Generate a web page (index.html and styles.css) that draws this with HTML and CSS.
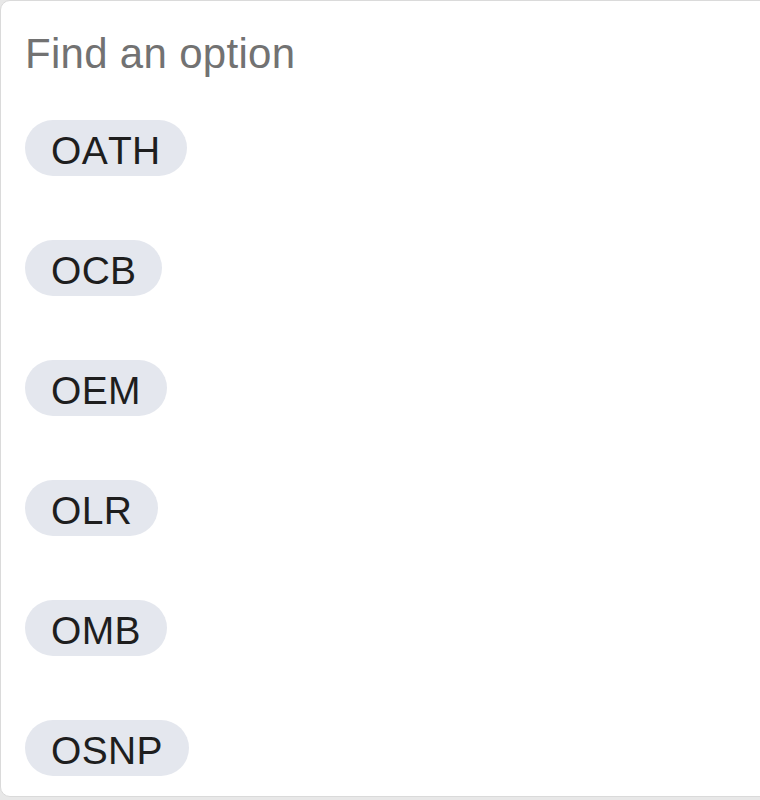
FILE: index.html
```html
<!DOCTYPE html>
<html lang="en">
<head>
    <meta charset="UTF-8">
    <meta name="viewport" content="width=device-width, initial-scale=1.0">
    <title>Find an option</title>
    <link rel="stylesheet" href="styles.css">
</head>
<body>
    <div class="panel">
        <div class="search">Find an option</div>
        <div class="options">
            <div class="option"><span class="chip">OATH</span></div>
            <div class="option"><span class="chip">OCB</span></div>
            <div class="option"><span class="chip">OEM</span></div>
            <div class="option"><span class="chip">OLR</span></div>
            <div class="option"><span class="chip">OMB</span></div>
            <div class="option"><span class="chip">OSNP</span></div>
        </div>
    </div>
</body>
</html>
```

FILE: styles.css
```css
body {
    margin: 0;
    background-color: #e8e8e8;
    font-family: "Liberation Sans", Arial, sans-serif;
    font-kerning: none;
    overflow: hidden;
}
.panel {
    box-sizing: border-box;
    width: 780px;
    height: 797px;
    padding: 29px 24px 0;
    background-color: white;
    border: 1px solid #dadada;
    border-radius: 10px 0 0 10px;
}
.search {
    font-size: 42px;
    line-height: 48px;
    letter-spacing: 0.3px;
    color: #727272;
}
.options {
    display: flex;
    flex-direction: column;
    align-items: flex-start;
    gap: 64px;
    margin-top: 42px;
}
.chip {
    display: inline-block;
    padding: 5px 26px 0;
    height: 51px;
    line-height: 51px;
    font-size: 39px;
    letter-spacing: 0.3px;
    color: #1e1e1e;
    background-color: #e4e7ee;
    border-radius: 28px;
}
```
